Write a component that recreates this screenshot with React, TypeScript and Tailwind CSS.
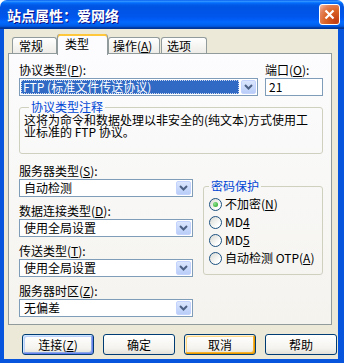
import type { ReactNode } from "react";

// Windows XP style "站点属性" dialog

function U({ children }: { children: ReactNode }) {
  return <span className="underline underline-offset-[1px]">{children}</span>;
}

function DropButton() {
  return (
    <div className="m-[1px] flex w-[15px] items-center justify-center rounded-[2px] border border-[#c3d3fd] bg-[linear-gradient(#dbe6fd,#b9cdf8)]">
      <svg width="9" height="6" viewBox="0 0 9 6">
        <path d="M1 1 L4.5 4.5 L8 1" fill="none" stroke="#4d6185" strokeWidth="2" />
      </svg>
    </div>
  );
}

function Combo({ value, selected, className = "" }: { value: string; selected?: boolean; className?: string }) {
  return (
    <div className={`flex h-[18px] border border-[#7f9db9] bg-white leading-[14px] ${className}`}>
      <div className="flex min-w-0 flex-1 p-[1px]">
        {selected ? (
          <span className="flex w-full items-center bg-[#316ac5] pl-[2px] text-white outline-1 outline-dotted outline-offset-[-1px] outline-[#cfdaf0]">
            {value}
          </span>
        ) : (
          <span className="flex items-center pl-[3px]">{value}</span>
        )}
      </div>
      <DropButton />
    </div>
  );
}

function Radio({ checked, children }: { checked?: boolean; children: ReactNode }) {
  return (
    <div className="flex h-[18px] items-center">
      <span className="ml-[5px] flex h-[13px] w-[13px] items-center justify-center rounded-full border border-[#1c5180] bg-[linear-gradient(135deg,#d8d8d2,#ffffff_75%)]">
        {checked && <span className="h-[5px] w-[5px] rounded-full bg-[radial-gradient(circle_at_35%_35%,#8ee28e,#21a121)]" />}
      </span>
      <span className="ml-[3px]">{children}</span>
    </div>
  );
}

function Field({ label, children }: { label: ReactNode; children: ReactNode }) {
  return (
    <div className="flex flex-col">
      <div className="h-[16px] leading-[16px]">{label}</div>
      {children}
    </div>
  );
}

function Button({ children, tone }: { children: ReactNode; tone?: "focus" | "hover" }) {
  const ring =
    tone === "focus"
      ? "shadow-[inset_-1px_-1px_#6982ee,inset_1px_1px_#cee7ff,inset_-2px_-2px_#8caae6,inset_2px_2px_#bccff9]"
      : tone === "hover"
        ? "shadow-[inset_-1px_-1px_#e59700,inset_1px_1px_#fff0cf,inset_-2px_-2px_#f8b330,inset_2px_2px_#fdd889]"
        : "";
  return (
    <button className={`flex h-[21px] w-[72px] items-center justify-center rounded-[3px] border border-[#003c74] bg-[linear-gradient(#ffffff,#f4f3ee_70%,#e3e1d8)] text-[12px] leading-[14px] text-black ${ring}`}>
      {children}
    </button>
  );
}

export default function App() {
  return (
    <div className="flex h-[363px] w-[344px] flex-col bg-white font-['Noto_Sans_CJK_SC',sans-serif] text-[12px] leading-[14px] text-black">
      {/* Title bar */}
      <div className="flex h-[29px] shrink-0 items-center justify-between rounded-t-[7px] bg-[linear-gradient(#0058ee_0%,#3593ff_4%,#288eff_6%,#127dff_8%,#036ffc_10%,#0262ee_14%,#0057e5_20%,#0054e3_24%,#0055eb_56%,#005bf5_66%,#026afe_76%,#0062ef_86%,#0052d6_92%,#0040ab_94%,#003092_100%)] pl-[7px] pr-[4px]">
        <span className="text-[14px] font-bold leading-[18px] text-white [text-shadow:1px_1px_#0f1089]">站点属性：爱网络</span>
        <button className="mb-[1px] flex h-[21px] w-[21px] items-center justify-center rounded-[3px] border border-white bg-[radial-gradient(circle_at_85%_85%,#c13c12_0%,#dc6527_50%,#e4825a_75%,#f5c2ad_100%)]">
          <svg width="11" height="11" viewBox="0 0 11 11">
            <path d="M1.5 1.5 L9.5 9.5 M9.5 1.5 L1.5 9.5" stroke="white" strokeWidth="2.2" />
          </svg>
        </button>
      </div>

      {/* Window body */}
      <div className="flex flex-1 flex-col border-b-[4px] border-l-[4px] border-r-[6px] border-[#0855dd] bg-[#ece9d8] pl-[4px] pt-[5px]">
        {/* Tabs */}
        <div className="flex h-[20px] items-end pl-[4px]">
          <div className="h-[17px] w-[45px] rounded-t-[3px] border border-b-0 border-[#919b9c] bg-[linear-gradient(#ffffff,#ecebe6)] pl-[6px] leading-[16px]">常规</div>
          <div className="relative z-10 mb-[-1px] h-[21px] w-[51px] rounded-t-[3px] border-x border-[#919b9c] bg-[#fcfcfe] pl-[7px] leading-[17px] shadow-[inset_0_2px_#ffc83c,inset_0_1px_#e68b2c]">
            <div className="pt-[1px]">类型</div>
          </div>
          <div className="h-[17px] w-[52px] rounded-t-[3px] border border-b-0 border-[#919b9c] bg-[linear-gradient(#ffffff,#ecebe6)] pl-[4px] leading-[16px]">操作(<U>A</U>)</div>
          <div className="ml-[1px] h-[17px] w-[46px] rounded-t-[3px] border border-b-0 border-[#919b9c] bg-[linear-gradient(#ffffff,#ecebe6)] pl-[5px] leading-[16px]">选项</div>
        </div>

        {/* Tab panel */}
        <div className="mt-[-1px] flex h-[272px] w-[324px] flex-col border border-[#919b9c] bg-[linear-gradient(#fcfcfe,#f4f3ee)] pl-[10px] pr-[8px] pt-[8px]">
          <div className="flex">
            <Field label={<>协议类型(<U>P</U>):</>}>
              <Combo value="FTP (标准文件传送协议)" selected className="w-[239px]" />
            </Field>
            <div className="ml-[7px] flex-1">
              <Field label={<>端口(<U>O</U>):</>}>
                <div className="flex h-[18px] items-center border border-[#7f9db9] bg-white pl-[3px]">21</div>
              </Field>
            </div>
          </div>

          <fieldset className="mt-[4px] h-[54px] rounded-[3px] border border-[#d0d0bf] px-[4px]">
            <legend className="ml-[5px] px-[2px] leading-[14px] text-[#0046d5]">协议类型注释</legend>
            <p className="leading-[12px]">
              这将为命令和数据处理以非安全的(纯文本)方式使用工
              <br />
              业标准的 FTP 协议。
            </p>
          </fieldset>

          <div className="mt-[9px] flex">
            <div className="flex w-[174px] flex-col gap-[6px]">
              <Field label={<>服务器类型(<U>S</U>):</>}>
                <Combo value="自动检测" />
              </Field>
              <Field label={<>数据连接类型(<U>D</U>):</>}>
                <Combo value="使用全局设置" />
              </Field>
              <Field label={<>传送类型(<U>T</U>):</>}>
                <Combo value="使用全局设置" />
              </Field>
              <Field label={<>服务器时区(<U>Z</U>):</>}>
                <Combo value="无偏差" />
              </Field>
            </div>

            <fieldset className="ml-[10px] mt-[16px] h-[96px] w-[120px] rounded-[3px] border border-[#d0d0bf]">
              <legend className="ml-[5px] px-[2px] leading-[14px] text-[#0046d5]">密码保护</legend>
              <div className="pt-[2px]">
                <Radio checked>不加密(<U>N</U>)</Radio>
                <Radio>MD<U>4</U></Radio>
                <Radio>MD<U>5</U></Radio>
                <Radio>自动检测 OTP(<U>A</U>)</Radio>
              </div>
            </fieldset>
          </div>
        </div>

        {/* Buttons */}
        <div className="mt-[9px] flex w-[329px] justify-end gap-[9px]">
          <Button tone="focus">连接(<U>Z</U>)</Button>
          <Button>确定</Button>
          <Button tone="hover">取消</Button>
          <Button>帮助</Button>
        </div>
      </div>
    </div>
  );
}
